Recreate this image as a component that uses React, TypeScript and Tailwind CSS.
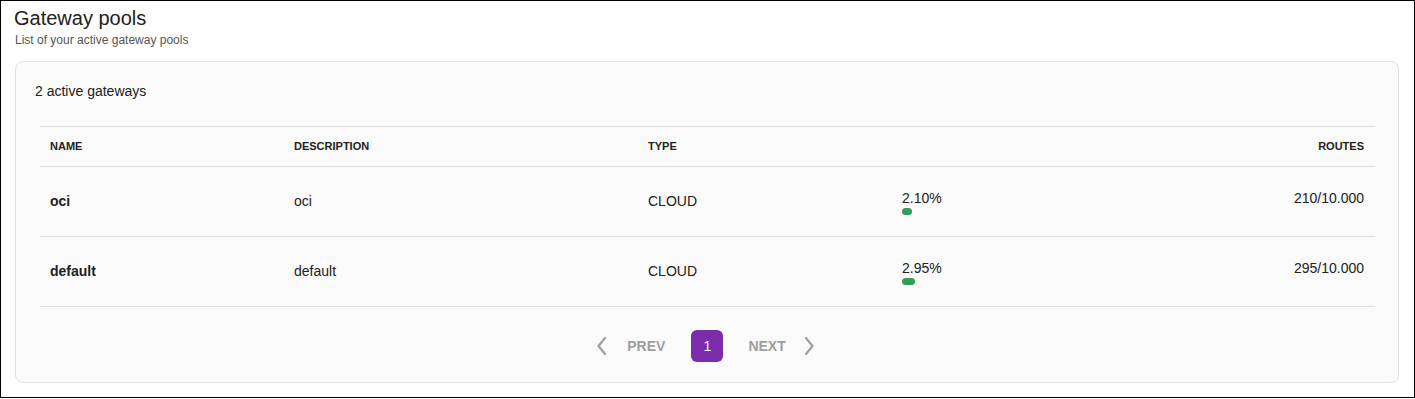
const rows = [
  { name: "oci", description: "oci", type: "CLOUD", pct: "2.10%", bar: 10, routes: "210/10.000" },
  { name: "default", description: "default", type: "CLOUD", pct: "2.95%", bar: 13, routes: "295/10.000" },
];

function Chevron({ dir }: { dir: "left" | "right" }) {
  return (
    <svg width="10" height="18" viewBox="0 0 10 18" fill="none" className="text-[#9e9e9e]">
      <polyline
        points={dir === "left" ? "8,1 1.5,9 8,17" : "2,1 8.5,9 2,17"}
        stroke="currentColor"
        strokeWidth="2.2"
        strokeLinecap="round"
        strokeLinejoin="round"
      />
    </svg>
  );
}

export default function App() {
  return (
    <div className="w-[1415px] h-[398px] border border-black bg-white pl-[14px] pr-[15px] pt-[5px] font-['Liberation_Sans',Arial,sans-serif] text-[#212121]">
      <h1 className="text-[20px] leading-6 ml-[-1px]">Gateway pools</h1>
      <p className="mt-[2px] text-[12px] leading-4 text-[#555]">List of your active gateway pools</p>

      <div className="mt-[13px] rounded-lg border border-[#e0e0e0] bg-[#fafafa]">
        <div className="px-[19px] pt-[19px] pb-[25px] text-[14px] leading-5">2 active gateways</div>

        <div className="ml-6 mr-[23px]">
          <table className="w-full table-fixed border-collapse">
            <colgroup>
              <col className="w-[244px]" />
              <col className="w-[354px]" />
              <col className="w-[254px]" />
              <col />
              <col className="w-[200px]" />
            </colgroup>
            <thead>
              <tr className="h-[40px] border-y border-[#e0e0e0] text-[11px] font-bold uppercase text-[#222]">
                <th className="pl-[10px] text-left font-bold">Name</th>
                <th className="pl-[10px] text-left font-bold">Description</th>
                <th className="pl-[10px] text-left font-bold">Type</th>
                <th />
                <th className="pr-[11px] text-right font-bold">Routes</th>
              </tr>
            </thead>
            <tbody className="text-[14px]">
              {rows.map((r) => (
                <tr key={r.name} className="h-[70px] border-b border-[#e0e0e0]">
                  <td className="pl-[10px] font-bold">{r.name}</td>
                  <td className="pl-[10px]">{r.description}</td>
                  <td className="pl-[10px]">{r.type}</td>
                  <td className="pl-[10px]">
                    <div className="leading-5">{r.pct}</div>
                    <div className="h-[8px]">
                      <div className="h-[7px] rounded-full bg-[#2f9e58]" style={{ width: r.bar }} />
                    </div>
                  </td>
                  <td className="pr-[11px] text-right">
                    <div className="leading-5 pb-[8px]">{r.routes}</div>
                  </td>
                </tr>
              ))}
            </tbody>
          </table>
        </div>

        <div className="flex items-center justify-center pt-[23px] pb-[20px] pr-[3px] text-[14px] font-bold">
          <button className="flex items-center gap-[20px] text-[#9e9e9e]">
            <Chevron dir="left" />
            <span>PREV</span>
          </button>
          <button className="ml-[26px] mr-[25px] h-8 w-8 rounded-md bg-[#7b2cab] text-[14px] font-normal text-white">
            1
          </button>
          <button className="flex items-center gap-[18px] text-[#9e9e9e]">
            <span>NEXT</span>
            <Chevron dir="right" />
          </button>
        </div>
      </div>
    </div>
  );
}
